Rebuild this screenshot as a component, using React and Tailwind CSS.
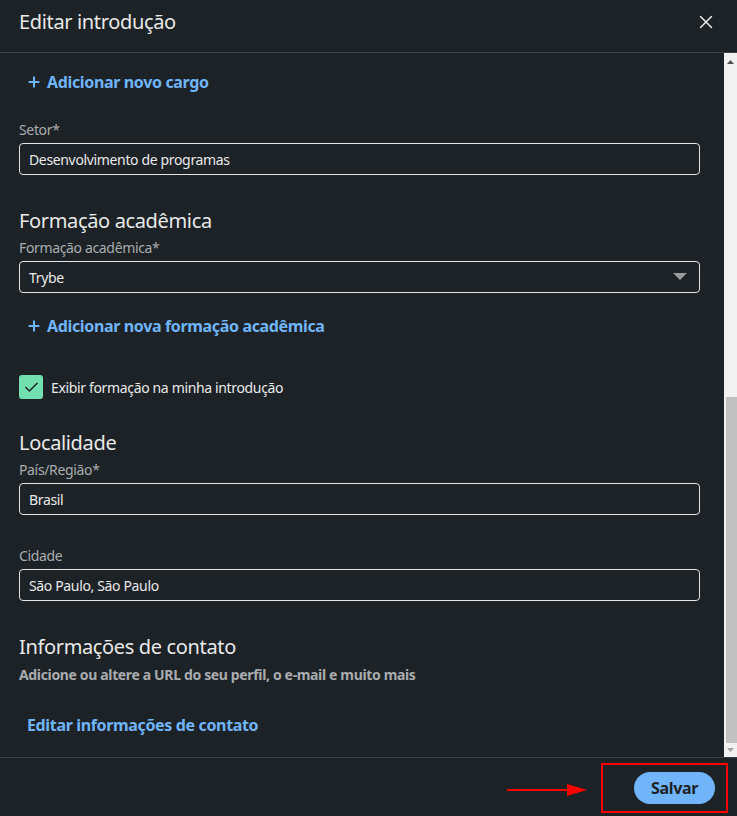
import React from 'react';
import { X, Plus, Check } from 'lucide-react';

// Single text input with a label above it
const Field = ({ label, value, select }) => (
    <div className="flex flex-col">
        <label className="text-[14px] leading-[20px] text-[#a9acae] mb-[3px]">{label}</label>
        <div className="h-[32px] rounded-[4px] border border-[#e4e4e4] flex items-center justify-between px-[9px] text-[14px] text-[#e9e9e9]">
            <span>{value}</span>
            {select && (
                <svg width="14" height="8" viewBox="0 0 14 8" className="mr-[3px]">
                    <path d="M0 0 L14 0 L7 7 Z" fill="#9a9a9a" />
                </svg>
            )}
        </div>
    </div>
);

const AddLink = ({ children }) => (
    <button className="flex items-center gap-[5px] text-[16px] font-bold text-[#70b5f9] pl-[7px]">
        <Plus size={16} strokeWidth={3} />
        {children}
    </button>
);

const Heading = ({ children }) => (
    <h2 className="text-[20px] leading-[26px] text-[#e9e9e9]">{children}</h2>
);

export default function App() {
    return (
        <div className="w-[737px] h-[816px] bg-[#1d2226] flex flex-col overflow-hidden tracking-[-0.35px]" style={{ fontFamily: '"Noto Sans", "Open Sans", sans-serif' }}>
            {/* Header */}
            <div className="h-[53px] shrink-0 flex items-center justify-between pl-[19px] pr-[20px] border-b border-[#3c4043]">
                <h1 className="text-[20px] text-[#e9e9e9] -mt-[8px]">Editar introdução</h1>
                <X size={22} strokeWidth={1.6} className="text-[#e9e9e9] -mt-[8px]" />
            </div>

            {/* Scroll area */}
            <div className="flex-1 flex min-h-0">
                <div className="flex-1 pl-[19px] pr-[24px] flex flex-col">
                    <div className="pt-[17px]"><AddLink>Adicionar novo cargo</AddLink></div>

                    <div className="mt-[26px]">
                        <Field label="Setor*" value="Desenvolvimento de programas" />
                    </div>

                    <div className="mt-[33px]"><Heading>Formação acadêmica</Heading></div>
                    <div className="mt-[4px]">
                        <Field label="Formação acadêmica*" value="Trybe" select />
                    </div>

                    <div className="mt-[21px]"><AddLink>Adicionar nova formação acadêmica</AddLink></div>

                    <div className="mt-[37px] flex items-center gap-[8px]">
                        <div className="w-[24px] h-[24px] rounded-[3px] bg-[#71dfb0] flex items-center justify-center">
                            <Check size={17} strokeWidth={2} className="text-[#1d2226]" />
                        </div>
                        <span className="text-[14px] text-[#e9e9e9]">Exibir formação na minha introdução</span>
                    </div>

                    <div className="mt-[31px]"><Heading>Localidade</Heading></div>
                    <div className="mt-[4px]">
                        <Field label="País/Região*" value="Brasil" />
                    </div>

                    <div className="mt-[31px]">
                        <Field label="Cidade" value="São Paulo, São Paulo" />
                    </div>

                    <div className="mt-[33px]"><Heading>Informações de contato</Heading></div>
                    <p className="text-[14px] font-bold text-[#a9acae] mt-[4px]">Adicione ou altere a URL do seu perfil, o e-mail e muito mais</p>
                    <button className="text-left text-[16px] font-bold text-[#70b5f9] pl-[8px] mt-[28px] tracking-[-0.35px]">Editar informações de contato</button>
                </div>

                {/* Scrollbar */}
                <div className="w-[13px] bg-[#f1f1f1] flex flex-col items-center">
                    <svg width="7" height="4" viewBox="0 0 7 4" className="mt-[7px]"><path d="M0 4 L3.5 0 L7 4 Z" fill="#505050" /></svg>
                    <div className="flex-1" />
                    <div className="w-[11px] h-[346px] bg-[#c1c1c1] ml-[2px]" />
                    <svg width="7" height="4" viewBox="0 0 7 4" className="my-[5px]"><path d="M0 0 L3.5 4 L7 0 Z" fill="#a3a3a3" /></svg>
                </div>
            </div>

            {/* Footer */}
            <div className="h-[59px] shrink-0 border-t border-[#3c4043] flex items-center justify-end pr-[9px]">
                <svg width="82" height="12" viewBox="0 0 82 12" className="mr-[12px] mt-[6px]">
                    <line x1="0" y1="6" x2="64" y2="6" stroke="#ff0000" strokeWidth="2" />
                    <path d="M60 0 L80 6 L60 12 Z" fill="#ff0000" />
                </svg>
                <div className="w-[127px] h-[50px] border-2 border-[#ff0000] flex items-center justify-end pr-[11px] mt-[2px]">
                    <button className="h-[32px] px-[17px] rounded-full bg-[#70b5f9] text-[#1d2226] text-[16px] font-bold">Salvar</button>
                </div>
            </div>
        </div>
    );
}
